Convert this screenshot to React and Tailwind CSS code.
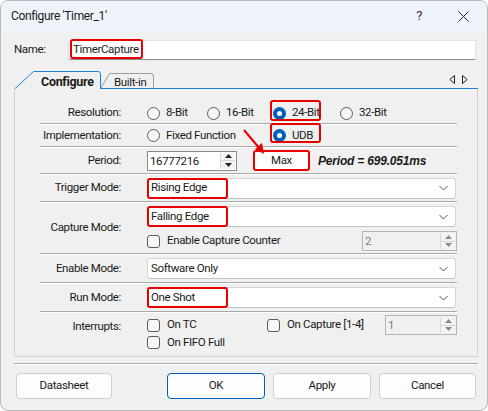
import React from "react";

const RED = "border-[#e60000]";

function Radio({ checked, label, className = "" }) {
  return (
    <div className={`flex items-center ${className}`}>
      {checked ? (
        <span className="w-[13px] h-[13px] rounded-full bg-[#005fb8] flex items-center justify-center">
          <span className="w-[5px] h-[5px] rounded-full bg-white" />
        </span>
      ) : (
        <span className="w-[13px] h-[13px] rounded-full border border-[#5d5d5d] bg-[#f6f6f6]" />
      )}
      <span className="ml-[6px]">{label}</span>
    </div>
  );
}

function Check({ label, className = "" }) {
  return (
    <div className={`flex items-center ${className}`}>
      <span className="w-[13px] h-[13px] rounded-[3px] border border-[#5d5d5d] bg-[#f6f6f6]" />
      <span className="ml-[7px]">{label}</span>
    </div>
  );
}

function Chevron() {
  return (
    <svg className="absolute right-[7px] top-1/2 -translate-y-1/2" width="9" height="5" viewBox="0 0 9 5">
      <path d="M0.5 0.5 L4.5 4.5 L8.5 0.5" fill="none" stroke="#555" strokeWidth="1" />
    </svg>
  );
}

function Select({ value, marked }) {
  return (
    <div className="relative h-[21px] w-[309px] bg-white border border-[#d6d6d6] border-b-[#c2c2c2] rounded-[3px] flex items-center pl-[3px]">
      <span>{value}</span>
      <Chevron />
      {marked && (
        <div className={`absolute left-[-1px] top-[-1px] w-[81px] h-[21px] border-2 ${RED} rounded-[3px]`} />
      )}
    </div>
  );
}

function Spin({ value, disabled, className = "" }) {
  const c = disabled ? "#8a8a8a" : "#222";
  return (
    <div
      className={`flex h-[20px] border ${disabled ? "border-[#b4b4b4] bg-[#f0f0f0] text-[#7a7a7a]" : "border-[#8a8a8a] bg-white"} ${className}`}
    >
      <span className="flex-1 pl-[2px] leading-[18px]">{value}</span>
      <div className="w-[15px] flex flex-col border-l border-[#d6d6d6] my-[1px] mr-[1px]">
        <div className="flex-1 flex items-center justify-center border-b border-[#d6d6d6] bg-[#f3f3f3]">
          <svg width="7" height="4" viewBox="0 0 7 4"><path d="M0 4 L3.5 0 L7 4Z" fill={c} /></svg>
        </div>
        <div className="flex-1 flex items-center justify-center bg-[#f3f3f3]">
          <svg width="7" height="4" viewBox="0 0 7 4"><path d="M0 0 L3.5 4 L7 0Z" fill={c} /></svg>
        </div>
      </div>
    </div>
  );
}

const Sep = () => <div className="h-[2px] border-t border-[#a9a9a9] border-b border-b-white" />;

function Row({ label, h, children, align = "items-center", labelClass = "" }) {
  return (
    <div className={`flex ${align}`} style={{ height: h }}>
      <div className={`w-[81px] text-right shrink-0 ${labelClass}`}>{label}</div>
      <div className="ml-[26px] flex-1">{children}</div>
    </div>
  );
}

export default function App() {
  return (
    <div className="relative w-[488px] h-[411px] bg-[#f0f0f0] border border-[#b9b9b9] rounded-[8px] overflow-hidden flex flex-col text-[11.5px] tracking-[-0.35px] text-[#1a1a1a] font-['Segoe_UI',Roboto,'Liberation_Sans',sans-serif]">
      {/* title bar */}
      <div className="h-[30px] shrink-0 bg-[#eef3fa] flex items-center pl-[10px] pr-[18px]">
        <span className="text-[12px]">Configure 'Timer_1'</span>
        <span className="ml-auto text-[13px] text-[#333]">?</span>
        <svg className="ml-[36px]" width="11" height="11" viewBox="0 0 11 11">
          <path d="M0.5 0.5 L10.5 10.5 M10.5 0.5 L0.5 10.5" stroke="#222" strokeWidth="1" />
        </svg>
      </div>

      <div className="flex-1 flex flex-col pl-[13px] pr-[9px]">
        {/* name row */}
        <div className="flex items-center mt-[9px] h-[20px]">
          <span className="w-[54px]">Name:</span>
          <div className="relative flex-1 h-[20px] mr-[2px] bg-white border border-[#e0e0e0] border-b-[#8a8a8a] rounded-[2px] flex items-center pl-[4px]">
            TimerCapture
            <div className={`absolute left-[1px] top-[-2px] w-[73px] h-[20px] border-2 ${RED} rounded-[3px]`} />
          </div>
        </div>

        {/* tabs */}
        <div className="flex mt-[11px] h-[18px]">
          <div className="relative w-[87px] h-[18px]">
            <svg className="absolute inset-0" width="87" height="18" viewBox="0 0 87 18">
              <path d="M0.5 18 L19.5 0.5 H84 Q86.5 0.5 86.5 3 V18" fill="#f0f0f0" stroke="#1e7fd6" strokeWidth="1" />
            </svg>
            <span className="absolute left-[27px] top-[2px] font-bold text-[12.5px] tracking-[-0.3px]">Configure</span>
          </div>
          <div className="flex-1 flex border-b border-[#1e7fd6]">
            <div className="relative w-[54px] h-[17px]">
              <svg className="absolute inset-0" width="54" height="17" viewBox="0 0 54 17">
                <path d="M0 17 L8.5 2.5 H50 Q52.5 2.5 52.5 5 V17" fill="#f0f0f0" stroke="#9c9c9c" strokeWidth="1" />
              </svg>
              <span className="absolute left-[13px] top-[3px]">Built-in</span>
            </div>
            <div className="ml-auto flex items-center gap-[7px] mr-[10px] pb-[1px]">
              <svg width="6" height="9" viewBox="0 0 6 9"><path d="M5.5 0.5 L0.8 4.5 L5.5 8.5Z" fill="none" stroke="#222" /></svg>
              <svg width="6" height="9" viewBox="0 0 6 9"><path d="M0.5 0.5 L5.2 4.5 L0.5 8.5Z" fill="none" stroke="#222" /></svg>
            </div>
          </div>
        </div>

        {/* panel */}
        <div className="h-[268px] border-l border-r border-b border-[#d2d2d2] pt-[14px]">
          <div className="ml-[25px] w-[417px] flex flex-col">
            <Row label="Resolution:" h={20}>
              <div className="flex items-center">
                <Radio label="8-Bit" className="w-[60px]" />
                <Radio label="16-Bit" className="w-[66px]" />
                <div className="relative w-[67px]">
                  <Radio checked label="24-Bit" />
                  <div className={`absolute left-[-3px] top-[-4px] w-[51px] h-[21px] border-2 ${RED} rounded-[3px]`} />
                </div>
                <Radio label="32-Bit" />
              </div>
            </Row>
            <Sep />
            <Row label="Implementation:" h={21}>
              <div className="flex items-center">
                <Radio label="Fixed Function" className="w-[126px]" />
                <div className="relative">
                  <Radio checked label="UDB" />
                  <div className={`absolute left-[-3px] top-[-4px] w-[51px] h-[20px] border-2 ${RED} rounded-[3px]`} />
                </div>
              </div>
            </Row>
            <Sep />
            <Row label="Period:" h={25}>
              <div className="flex items-center">
                <Spin value="16777216" className="w-[90px]" />
                <div className={`ml-[16px] w-[57px] h-[21px] bg-white border-2 ${RED} rounded-[3px] flex items-center justify-center`}>
                  Max
                </div>
                <span className="ml-[8px] font-bold italic font-['Liberation_Sans',Arial,sans-serif] text-[12px] tracking-[-0.2px]">
                  Period = 699.051ms
                </span>
              </div>
            </Row>
            <Sep />
            <Row label="Trigger Mode:" h={26}>
              <Select value="Rising Edge" marked />
            </Row>
            <Sep />
            <Row label="Capture Mode:" h={50}>
              <div className="flex flex-col pt-[1px]">
                <Select value="Falling Edge" marked />
                <div className="flex items-center mt-[4px]">
                  <Check label="Enable Capture Counter" />
                  <Spin value="2" disabled className="ml-auto w-[95px]" />
                </div>
              </div>
            </Row>
            <Sep />
            <Row label="Enable Mode:" h={27}>
              <Select value="Software Only" />
            </Row>
            <Sep />
            <Row label="Run Mode:" h={27}>
              <Select value="One Shot" marked />
            </Row>
            <Sep />
            <Row label="Interrupts:" h={42} align="items-start" labelClass="pt-[5px]">
              <div className="flex flex-col pt-[2px]">
                <div className="flex items-center h-[20px]">
                  <Check label="On TC" className="w-[120px]" />
                  <Check label="On Capture [1-4]" />
                  <Spin value="1" disabled className="ml-auto w-[72px]" />
                </div>
                <Check label="On FIFO Full" className="mt-[-1px]" />
              </div>
            </Row>
          </div>
        </div>

        <div className="mt-[6px] h-[2px] border-t border-[#a9a9a9] border-b border-b-white" />

        {/* buttons */}
        <div className="flex mt-[8px] ml-[2px] h-[26px]">
          <button className="w-[96px] h-full bg-[#fdfdfd] border border-[#d0d0d0] rounded-[4px]">Datasheet</button>
          <button className="ml-[55px] w-[98px] h-full bg-[#fdfdfd] border border-[#005fb8] rounded-[4px]">OK</button>
          <button className="ml-[8px] w-[98px] h-full bg-[#fdfdfd] border border-[#d0d0d0] rounded-[4px]">Apply</button>
          <button className="ml-[8px] w-[97px] h-full bg-[#fdfdfd] border border-[#d0d0d0] rounded-[4px]">Cancel</button>
        </div>
      </div>

      {/* red annotation arrow */}
      <svg className="absolute left-0 top-0 pointer-events-none" width="488" height="411" viewBox="0 0 488 411">
        <path d="M243 129 L259 148" stroke="#e60000" strokeWidth="2" />
        <path d="M263 153 L254 148 L261 142Z" fill="#e60000" />
      </svg>
    </div>
  );
}
